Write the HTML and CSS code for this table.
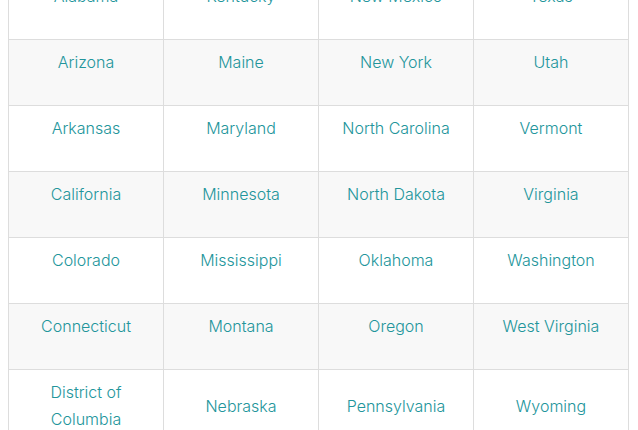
FILE: index.html
```html
<!DOCTYPE html>
<html>
<head>
<meta charset="utf-8">
<link rel="stylesheet" href="styles.css">
</head>
<body>
<table class="states">
  <tbody>
    <tr><td>Alabama</td><td>Kentucky</td><td>New Mexico</td><td>Texas</td></tr>
    <tr><td>Arizona</td><td>Maine</td><td>New York</td><td>Utah</td></tr>
    <tr><td>Arkansas</td><td>Maryland</td><td>North Carolina</td><td>Vermont</td></tr>
    <tr><td>California</td><td>Minnesota</td><td>North Dakota</td><td>Virginia</td></tr>
    <tr><td>Colorado</td><td>Mississippi</td><td>Oklahoma</td><td>Washington</td></tr>
    <tr><td>Connecticut</td><td>Montana</td><td>Oregon</td><td>West Virginia</td></tr>
    <tr><td>District of Columbia</td><td>Nebraska</td><td>Pennsylvania</td><td>Wyoming</td></tr>
  </tbody>
</table>
<script src="script.js"></script>
</body>
</html>
```
FILE: styles.css
```css
html, body {
  margin: 0;
  padding: 0;
  background: #ffffff;
}
body {
  margin: 8px;
  font-family: "Inter", "Lato", sans-serif;
}
.states {
  width: calc(100% - 1px);
  border-collapse: collapse;
  table-layout: fixed;
}
.states td {
  border: 1px solid #dddddd;
  padding: 9px 15px 29px;
  text-align: center;
  vertical-align: middle;
  font-size: 16px;
  font-weight: 300;
  line-height: 27px;
  color: #22959b;
}
.states tr:nth-child(even) td {
  background: #f8f8f8;
}
```
FILE: script.js
```js
window.scrollTo(0, 35);
```
